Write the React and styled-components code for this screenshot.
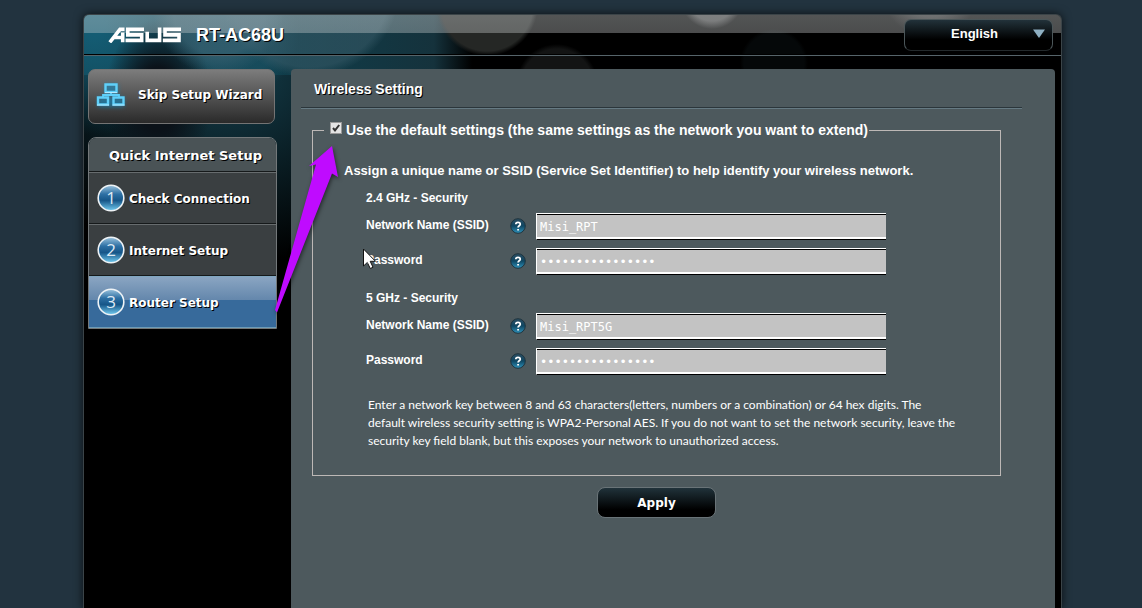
import React from "react";
import styled, { createGlobalStyle } from "styled-components";

const SANS = '"Liberation Sans", Arial, sans-serif';
const WIDE = '"DejaVu Sans", Verdana, sans-serif';
const HUMANIST = '"Open Sans", "Segoe UI", sans-serif';
const NOTE = 'Lato, "Segoe UI", sans-serif';
const MONO = '"DejaVu Sans Mono", "Lucida Console", monospace';

const GlobalStyle = createGlobalStyle`
  *, *::before, *::after { box-sizing: border-box; }
  html { background: #22333f; }
  body { margin: 0; color: #fff; font-family: ${SANS}; }
`;

const Page = styled.div`
  position: relative;
  min-height: 100vh;
  padding: 14px 80px 0 83px;
  display: flex;
  overflow: hidden;
  background: #22333f;
`;

const Shell = styled.div`
  flex: 1;
  min-width: 0;
  display: flex;
  flex-direction: column;
  border: 1px solid #3b4448;
  border-bottom: 0;
  border-radius: 6px 6px 0 0;
  box-shadow: 0 0 10px rgba(0, 0, 0, 0.7);
  background:
    linear-gradient(#d0d4d566, #d0d4d55c) top / 100% 18px no-repeat,
    radial-gradient(circle at 628px -18px, #474747 0 24px, transparent 32px),
    radial-gradient(circle at 846px -28px, #2e2e2e 0 30px, transparent 50px),
    radial-gradient(circle at 403px -10px, #252725 0 46px, transparent 51px),
    radial-gradient(circle at 473px 70px, #131414 0 36px, transparent 41px),
    radial-gradient(circle at 690px 48px, #050809 0 30px, transparent 34px),
    radial-gradient(circle at 135px -6px, #3b6373aa 0 46px, transparent 66px),
    radial-gradient(ellipse 54px 80px at 74px 84px, #0b1219 40%, transparent 100%),
    radial-gradient(circle at 225px -30px, #35586599 0 82px, transparent 92px),
    radial-gradient(circle at 155px 20px, #1c556799 0 40px, transparent 60px),
    radial-gradient(ellipse 110px 110px at 10px 10px, #145c73 10%, transparent 100%),
    linear-gradient(90deg, #10404f 0, #103c49 220px, #15323c 350px, #000 388px) top / 100% 60px no-repeat,
    radial-gradient(ellipse 230px 200px at 140px 50px, #11333e 20%, #000 100%),
    #000;
`;

const Header = styled.header`
  display: flex;
  align-items: center;
  height: 41px;
  padding: 0 8px 0 24px;
  border-bottom: 1px solid #56646a;
  box-shadow: inset 0 -1px 0 #000;
`;

const Model = styled.h1`
  flex: 1;
  margin: 0 0 0 15px;
  font-size: 18px;
  line-height: 22px;
  text-shadow: 1px 1px 0 #000;
`;

const Language = styled.label`
  position: relative;
  display: flex;

  select {
    appearance: none;
    width: 149px;
    height: 32px;
    padding: 0 8px 3px 0;
    border: 1px solid #4b5659;
    border-bottom-color: #23292b;
    border-radius: 7px;
    background: linear-gradient(#22323a, #000 65%);
    color: #fff;
    font: bold 13px ${SANS};
    text-align-last: center;
  }

  svg {
    position: absolute;
    top: 10px;
    right: 8px;
    pointer-events: none;
  }
`;

const Columns = styled.div`
  flex: 1;
  display: flex;
  gap: 14px;
  padding: 13px 6px 0 4px;
`;

const Sidebar = styled.aside`
  flex: 0 0 189px;
  font-family: ${WIDE};
  font-weight: bold;
  text-shadow: 1px 1px 0 #000;
`;

const SkipButton = styled.button`
  display: flex;
  align-items: center;
  gap: 11px;
  width: 187px;
  height: 55px;
  padding: 0 8px 4px 6px;
  border: 1px solid #747474;
  border-radius: 7px;
  background: linear-gradient(#7c7c7c, #2a2a2a);
  color: #fff;
  font: inherit;
  font-size: 12px;
  white-space: nowrap;
  text-shadow: inherit;
`;

const Menu = styled.nav`
  margin-top: 13px;
  border: 1px solid #73787a;
  border-radius: 8px 8px 0 0;
  overflow: hidden;
`;

const MenuTitle = styled.h2`
  margin: 0;
  padding: 1px 0 0 20px;
  height: 34px;
  background: #4a5356;
  border-bottom: 1px solid #15191a;
  font-size: 13px;
  line-height: 34px;
  white-space: nowrap;
`;

const Step = styled.a`
  display: flex;
  align-items: center;
  gap: 4px;
  height: 52px;
  padding-left: 8px;
  border: solid ${(p) => (p.$active ? "#7fa6c0" : "#676c6e")};
  border-width: 1px 0 0;
  box-shadow: inset 0 -1px 0 ${(p) => (p.$active ? "#6b9cb8" : "#15191a")};
  background: ${(p) =>
    p.$active
      ? "linear-gradient(#8aa5c2, #6487ac 23px, #376a9b 23px, #376a9b)"
      : "#3a3f41"};
  color: #fff;
  font-size: 12px;
  text-decoration: none;
`;

const Panel = styled.main`
  flex: 1;
  min-width: 0;
  padding-bottom: 40px;
  background: #4d595d;
  border-radius: 4px 4px 0 0;
`;

const PanelTitle = styled.h2`
  margin: 0 33px 0 10px;
  padding: 10px 13px 8px;
  border-bottom: 1px solid #2b363b;
  box-shadow: 0 1px 0 #667a83;
  font-size: 14px;
  line-height: 20px;
  text-shadow: 1px 1px 0 #000;
`;

const Settings = styled.form`
  margin: 12px 54px 0 21px;
  display: flex;
  flex-direction: column;
  align-items: center;
  gap: 11px;
`;

const Group = styled.fieldset`
  align-self: stretch;
  min-width: 0;
  margin: 0;
  padding: 21px 24px 25px 11px;
  border: 1px solid #bdb8b6;
`;

const Legend = styled.legend`
  padding: 0 1px 0 6px;
  font-size: 14px;
  font-weight: bold;
  line-height: 20px;

  label {
    display: flex;
    align-items: center;
    gap: 4px;
  }
`;

const Checkbox = styled.input`
  appearance: none;
  width: 12px;
  height: 12px;
  margin: 0 0 4px;
  border: 1px solid #9a9a9a;
  background: #e4e4e4
    url("data:image/svg+xml,%3Csvg xmlns='http://www.w3.org/2000/svg' viewBox='0 0 10 10'%3E%3Cpath d='M2 5l2 2.4L8.2 2' fill='none' stroke='%23333' stroke-width='2'/%3E%3C/svg%3E")
    center / 10px 10px no-repeat;
`;

const Intro = styled.p`
  margin: 0 0 8px 20px;
  font-size: 13px;
  font-weight: bold;
  line-height: 20px;
`;

const Band = styled.section`
  display: grid;
  gap: 8px;
  margin: 0 0 14px 42px;
  font-size: 12px;
  font-weight: bold;
`;

const BandTitle = styled.h3`
  margin: 0 0 -2px;
  font-size: 12px;
  line-height: 18px;
`;

const Field = styled.div`
  display: grid;
  grid-template-columns: 144px 26px minmax(0, 350px);
  align-items: center;

  label { padding-bottom: 4px; }
`;

const Help = styled.button`
  display: flex;
  padding: 0 0 2px;
  border: 0;
  background: none;
`;

const TextBox = styled.input`
  width: 100%;
  height: 27px;
  padding: 0 3px;
  border: solid;
  border-width: 1px 0 1px 1px;
  border-color: #fff #000 #000 #fff;
  border-radius: 0;
  box-shadow: inset 0 1px 0 #000, inset 0 -2px 0 #fff;
  background: #c3c3c3;
  color: #fff;
  font: 12px ${MONO};
`;

const Note = styled.p`
  max-width: 592px;
  margin: 21px 0 0 44px;
  font: 12px/18px ${NOTE};
`;

const ApplyButton = styled.button`
  width: 119px;
  height: 31px;
  border: 1px solid #697377;
  border-radius: 8px;
  background: linear-gradient(#20323a, #000 75%);
  color: #fff;
  font: bold 12px ${WIDE};
`;

const Overlay = styled.svg`
  position: absolute;
  top: 0;
  left: 0;
  pointer-events: none;
`;

const Logo = () => (
  <svg width="73" height="16" viewBox="0 0 73 16" role="img" aria-label="ASUS">
    <g fill="none" stroke="#fff" strokeWidth="3.6">
      <path d="M1.800 15.300L12 2.300H16.500M14.700 5.600V15.300M6 10.500H15" />
      <path d="M36 2.300H19.800V7.900H33.700V13.400H17.500" />
      <path d="M39.200 4.800V13.400H51.600V0.500" />
      <path d="M73 2.300H57V7.900H71V13.400H54.800" />
    </g>
  </svg>
);

const NetworkIcon = () => (
  <svg width="32" height="34" viewBox="0 0 32 34" aria-hidden="true">
    <defs>
      <filter id="glow" x="-30%" y="-30%" width="160%" height="160%">
        <feGaussianBlur stdDeviation="2" />
      </filter>
    </defs>
    <path d="M3 19h26v10H3zM10 6h13v10H10z" fill="#0b8cc4" opacity=".6" filter="url(#glow)" />
    <g fill="none" stroke="#5fd0fa" strokeWidth="2.400">
      <path d="M10.500 6.500h11v7.500h-11zM3 19.500h10v7H3zM18.500 19.500h10v7h-10z" />
      <path d="M16 15v2.500M8 19v-2h16v2" strokeWidth="1.800" />
      <path d="M2 27h12M17.500 27h12M10 14.500h12" stroke="#b4eaff" strokeWidth="1.200" />
    </g>
  </svg>
);

const NumberBall = ({ n }) => (
  <svg width="28" height="28" viewBox="0 0 28 28" overflow="visible" aria-hidden="true">
    <defs>
      <linearGradient id={`ball${n}`} x2="0" y2="1">
        <stop offset="0" stopColor="#9cc4de" />
        <stop offset=".35" stopColor="#2e70a4" />
        <stop offset=".6" stopColor="#165688" />
        <stop offset="1" stopColor="#74cdf2" />
      </linearGradient>
    </defs>
    <circle cx="14" cy="13" r="12.800" fill={`url(#ball${n})`} stroke="#eef3f6" strokeWidth="1.600" />
    <text
      x="14"
      y="19"
      textAnchor="middle"
      fill="#dfeaf4"
      fontFamily={HUMANIST}
      fontSize="17"
      fontWeight="400"
      style={{ textShadow: "none" }}
    >
      {n}
    </text>
  </svg>
);

const HelpIcon = () => (
  <svg width="16" height="16" viewBox="0 0 16 16" aria-hidden="true">
    <defs>
      <linearGradient id="helpFill" x2="0" y2="1">
        <stop offset="0" stopColor="#2c4e62" />
        <stop offset=".5" stopColor="#0f4763" />
        <stop offset="1" stopColor="#2f94bd" />
      </linearGradient>
    </defs>
    <circle cx="8" cy="8" r="7.300" fill="url(#helpFill)" stroke="#1f343e" />
    <path
      d="M5.800 6.200C5.800 3.600 10.300 3.700 10.200 6.200C10.100 7.800 8.100 7.800 8.100 9.600M8.100 10.900V12.500"
      fill="none"
      stroke="#fff"
      strokeWidth="1.800"
    />
  </svg>
);

const steps = ["Check Connection", "Internet Setup", "Router Setup"];

const bands = [
  { id: "g2", title: "2.4 GHz - Security", ssid: "Misi_RPT" },
  { id: "g5", title: "5 GHz - Security", ssid: "Misi_RPT5G" },
];

function FieldRow({ id, label, ...rest }) {
  return (
    <Field>
      <label htmlFor={id}>{label}</label>
      <Help type="button" aria-label={`Help: ${label}`}>
        <HelpIcon />
      </Help>
      <TextBox id={id} {...rest} />
    </Field>
  );
}

export default function App() {
  return (
    <>
      <GlobalStyle />
      <Page>
        <Shell>
          <Header>
            <Logo />
            <Model>RT-AC68U</Model>
            <Language>
              <select aria-label="Language" defaultValue="en">
                <option value="en">English</option>
              </select>
              <svg width="12" height="10" viewBox="0 0 12 10" aria-hidden="true">
                <path d="M0 0.500H12L6 9z" fill="#8fb0c3" />
              </svg>
            </Language>
          </Header>
          <Columns>
            <Sidebar>
              <SkipButton type="button">
                <NetworkIcon />
                Skip Setup Wizard
              </SkipButton>
              <Menu>
                <MenuTitle>Quick Internet Setup</MenuTitle>
                {steps.map((name, i) => (
                  <Step key={name} href="#" $active={i === 2}>
                    <NumberBall n={i + 1} />
                    {name}
                  </Step>
                ))}
              </Menu>
            </Sidebar>
            <Panel>
              <PanelTitle>Wireless Setting</PanelTitle>
              <Settings onSubmit={(e) => e.preventDefault()}>
                <Group>
                  <Legend>
                    <label>
                      <Checkbox type="checkbox" defaultChecked />
                      Use the default settings (the same settings as the network you want to extend)
                    </label>
                  </Legend>
                  <Intro>
                    Assign a unique name or SSID (Service Set Identifier) to help identify your
                    wireless network.
                  </Intro>
                  {bands.map((b) => (
                    <Band key={b.id}>
                      <BandTitle>{b.title}</BandTitle>
                      <FieldRow
                        id={`${b.id}-ssid`}
                        label="Network Name (SSID)"
                        type="text"
                        defaultValue={b.ssid}
                      />
                      <FieldRow
                        id={`${b.id}-key`}
                        label="Password"
                        type="password"
                        defaultValue="0000000000000000"
                      />
                    </Band>
                  ))}
                  <Note>
                    Enter a network key between 8 and 63 characters(letters, numbers or a
                    combination) or 64 hex digits. The default wireless security setting is
                    WPA2-Personal AES. If you do not want to set the network security, leave the
                    security key field blank, but this exposes your network to unauthorized access.
                  </Note>
                </Group>
                <ApplyButton type="submit">Apply</ApplyButton>
              </Settings>
            </Panel>
          </Columns>
        </Shell>
        <Overlay width="400" height="340" viewBox="0 0 400 340" aria-hidden="true">
          <path
            d="M332 146L338 177L332 173.500L277 312.500L275 310L316 164.500L309 166Z"
            fill="#bf0bff"
            style={{ filter: "drop-shadow(1px 2px 2px #0008)" }}
          />
          <path
            d="M363.500 249V266L367.300 262.500L370.300 268.500L373 267.200L370.200 261.300H375.500Z"
            fill="#fff"
            stroke="#111"
          />
        </Overlay>
      </Page>
    </>
  );
}
